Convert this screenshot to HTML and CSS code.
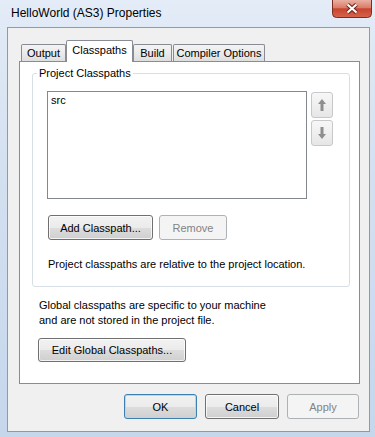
FILE: index.html
```html
<!DOCTYPE html>
<html>
<head>
<meta charset="utf-8">
<title>HelloWorld (AS3) Properties</title>
<link rel="stylesheet" href="styles.css">
</head>
<body>
<div class="window">
  <div class="titlebar">
    <span class="title">HelloWorld (AS3) Properties</span>
    <div class="close">
      <svg width="40" height="18" viewBox="0 0 40 18">
        <defs>
          <linearGradient id="cg" x1="0" y1="0" x2="0" y2="1">
            <stop offset="0" stop-color="#eab0a2"/>
            <stop offset="0.45" stop-color="#d97b66"/>
            <stop offset="0.5" stop-color="#c7442f"/>
            <stop offset="1" stop-color="#d6654d"/>
          </linearGradient>
        </defs>
        <path d="M0.5 0 V13.5 A4 4 0 0 0 4.5 17.5 H35.5 A4 4 0 0 0 39.5 13.5 V0" fill="url(#cg)" stroke="#7b2d22"/>
        <path d="M15.5 4.5 L24.5 12.5 M24.5 4.5 L15.5 12.5" stroke="#6a2218" stroke-width="4.2"/>
        <path d="M15.5 4.5 L24.5 12.5 M24.5 4.5 L15.5 12.5" stroke="#ffffff" stroke-width="2.2"/>
      </svg>
    </div>
  </div>
  <div class="client">
    <div class="tabs">
      <div class="tab t-output">Output</div>
      <div class="tab selected t-class">Classpaths</div>
      <div class="tab t-build">Build</div>
      <div class="tab t-comp">Compiler Options</div>
    </div>
    <div class="panel">
      <div class="group">
        <div class="group-label">Project Classpaths</div>
        <div class="list-row">
          <div class="list">src</div>
          <div class="updown">
            <div class="arrow-btn">
              <svg width="20" height="24" viewBox="0 0 20 24">
                <path d="M10 6 L14 11 H11.5 V18 H8.5 V11 H6 Z" fill="#8e8e8e"/>
              </svg>
            </div>
            <div class="arrow-btn">
              <svg width="20" height="24" viewBox="0 0 20 24">
                <path d="M10 18 L14 13 H11.5 V6 H8.5 V13 H6 Z" fill="#8e8e8e"/>
              </svg>
            </div>
          </div>
        </div>
        <div class="btn-row">
          <div class="btn b-add">Add Classpath...</div>
          <div class="btn disabled b-remove">Remove</div>
        </div>
        <p class="note">Project classpaths are relative to the project location.</p>
      </div>
      <p class="global">Global classpaths are specific to your machine<br>and are not stored in the project file.</p>
      <div class="btn b-edit">Edit Global Classpaths...</div>
    </div>
    <div class="footer">
      <div class="btn default b-ok">OK</div>
      <div class="btn b-cancel">Cancel</div>
      <div class="btn disabled b-apply">Apply</div>
    </div>
  </div>
</div>
</body>
</html>
```
FILE: styles.css
```css
* { box-sizing: border-box; }
html, body { margin: 0; padding: 0; }
body {
  width: 375px;
  height: 437px;
  overflow: hidden;
  font-family: "Liberation Sans", Arial, sans-serif;
  font-size: 11px;
  color: #000;
  background: linear-gradient(180deg, #e3ecf7 0%, #d3e0f0 40%, #c6d7ec 100%);
}
.window {
  height: 437px;
  display: flex;
  flex-direction: column;
}
.titlebar {
  height: 27px;
  flex: none;
  display: flex;
  justify-content: space-between;
  align-items: flex-start;
}
.title {
  font-size: 12px;
  line-height: 15px;
  margin: 6px 0 0 11px;
}
.close {
  width: 40px;
  height: 18px;
  margin-right: 3px;
}
.close svg { display: block; }
.client {
  flex: 1;
  margin: 0 5px 5px 7px;
  background: #f0f0f0;
  border: 1px solid #8a9bb0;
  display: flex;
  flex-direction: column;
}
.tabs {
  height: 33px;
  flex: none;
  display: flex;
  align-items: flex-end;
  padding-left: 13px;
}
.tab {
  height: 17px;
  border: 1px solid #898c95;
  border-bottom: none;
  border-radius: 2px 2px 0 0;
  background: linear-gradient(180deg, #f3f3f3 0%, #ebebeb 50%, #dedede 100%);
  text-align: center;
  line-height: 16px;
}
.t-output { width: 45px; }
.t-class { width: 67px; }
.t-build { width: 39px; }
.t-comp { width: 92px; margin-left: 1px; }
.tab.selected {
  height: 22px;
  margin-bottom: -1px;
  background: #ffffff;
  position: relative;
  z-index: 1;
  line-height: 18px;
}
.panel {
  flex: none;
  width: 341px;
  height: 323px;
  margin-left: 11px;
  border: 1px solid #898c95;
  background: #ffffff;
  display: flex;
  flex-direction: column;
  align-items: flex-start;
}
.group {
  width: 318px;
  margin: 11px 0 0 12px;
  border: 1px solid #d5dfe5;
  border-radius: 3px;
  padding-bottom: 14px;
}
.group-label {
  width: fit-content;
  margin: -8px 0 0 4px;
  padding: 0 2px;
  background: #ffffff;
  line-height: 14px;
}
.list-row {
  display: flex;
  align-items: flex-start;
  margin: 11px 0 0 14px;
}
.list {
  width: 260px;
  height: 108px;
  border: 1px solid #828790;
  background: #ffffff;
  padding: 1px 3px;
  line-height: 15px;
}
.updown {
  display: flex;
  flex-direction: column;
  gap: 2px;
  margin: 1px 0 0 4px;
}
.arrow-btn {
  width: 22px;
  height: 26px;
  border: 1px solid #c6c8ca;
  border-radius: 3px;
  background: linear-gradient(180deg, #f7f7f7 0%, #efefef 50%, #e6e6e6 100%);
}
.arrow-btn svg { display: block; }
.btn-row {
  display: flex;
  gap: 6px;
  margin: 16px 0 0 15px;
}
.btn {
  height: 25px;
  border: 1px solid #707070;
  border-radius: 3px;
  background: linear-gradient(180deg, #f2f2f2 0%, #ebebeb 50%, #dddddd 51%, #cfcfcf 100%);
  box-shadow: inset 0 0 0 1px rgba(255, 255, 255, 0.75);
  display: flex;
  align-items: center;
  justify-content: center;
  line-height: 14px;
}
.btn.disabled {
  border-color: #adb2b5;
  background: #f4f4f4;
  color: #838383;
  box-shadow: none;
}
.btn.default {
  border-color: #3c7fb1;
  box-shadow: inset 0 0 0 1px #a9dcf5;
}
.b-add { width: 105px; }
.b-remove { width: 68px; }
.note {
  margin: 17px 0 0 15px;
  line-height: 15px;
}
.global {
  margin: 11px 0 0 19px;
  line-height: 15px;
}
.b-edit {
  width: 148px;
  height: 24px;
  margin: 10px 0 0 18px;
}
.footer {
  display: flex;
  justify-content: flex-end;
  gap: 8px;
  margin: 10px 10px 0 0;
}
.b-ok { width: 73px; }
.b-cancel { width: 74px; }
.b-apply { width: 72px; }
```
